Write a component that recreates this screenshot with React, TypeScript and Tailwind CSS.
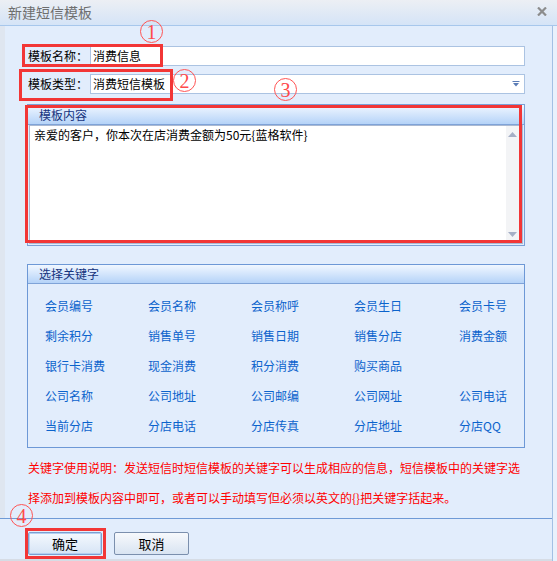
import React from "react";

const FONT = { fontFamily: '"Noto Sans CJK SC", "Noto Sans", sans-serif' };

const KEYWORDS = [
  ["会员编号", "会员名称", "会员称呼", "会员生日", "会员卡号"],
  ["剩余积分", "销售单号", "销售日期", "销售分店", "消费金额"],
  ["银行卡消费", "现金消费", "积分消费", "购买商品", ""],
  ["公司名称", "公司地址", "公司邮编", "公司网址", "公司电话"],
  ["当前分店", "分店电话", "分店传真", "分店地址", "分店QQ"],
];

const Circled = ({ n, className }: { n: string; className: string }) => (
  <span
    className={`absolute flex h-[23px] w-[23px] items-center justify-center rounded-full border border-[#ff5454] text-[20px] leading-none text-[#ff4a4a] ${className}`}
    style={{ fontFamily: '"Liberation Serif", serif' }}
  >
    {n}
  </span>
);

const RedBox = ({ className }: { className: string }) => (
  <div className={`pointer-events-none absolute border-[3px] border-[#f23636] ${className}`} />
);

const GroupHeader = ({ title, h }: { title: string; h: string }) => (
  <div className={`flex items-center border-b border-[#7fa3d8] bg-linear-to-b from-[#f1f7ff] to-[#b5d3f8] pl-[11px] text-[12px] text-[#15337d] ${h}`}>
    {title}
  </div>
);

export default function App() {
  return (
    <div className="relative flex h-[561px] w-[557px] flex-col overflow-hidden bg-[#e2edfc] text-black" style={FONT}>
      {/* Title bar */}
      <div className="flex h-[26px] shrink-0 items-center justify-between border-b border-[#a7c7ec] bg-linear-to-b from-[#eceff4] to-[#d5e4f7] pl-[8px] pr-[10px]">
        <span className="text-[14px] text-[#6e6e6e]">新建短信模板</span>
        <svg width="10" height="9" viewBox="0 0 10 9" className="mb-[2px]">
          <path d="M1 0.5 L9 8.5 M9 0.5 L1 8.5" stroke="#8c8c8c" strokeWidth="2.2" />
        </svg>
      </div>

      <div className="flex flex-1">
        <div className="flex flex-1 flex-col border-r border-[#a3c0e4]">
          {/* Body */}
          <div className="border-l-[5px] border-[#dfe6f0] pt-[20px] pl-[23px] pr-[27px] pb-[5px]">
            <div className="flex h-[20px] items-center">
              <span className="w-[62px] text-[12px]">模板名称：</span>
              <div className="flex h-full flex-1 items-center border border-[#abc3e2] bg-white pl-[2px] text-[12px]">
                消费信息
              </div>
            </div>
            <div className="mt-[8px] flex h-[20px] items-center">
              <span className="w-[62px] text-[12px]">模板类型：</span>
              <div className="flex h-full flex-1 items-center justify-between border border-[#abc3e2] bg-white pl-[2px] pr-[4px] text-[12px]">
                <span>消费短信模板</span>
                <svg width="8" height="6" viewBox="0 0 8 6">
                  <path d="M0.5 0.5 H7.5" stroke="#5a7cb6" strokeWidth="1" />
                  <path d="M1 2 H7 L4 5.5 Z" fill="#5a7cb6" />
                </svg>
              </div>
            </div>

            {/* 模板内容 */}
            <div className="ml-[-1px] mt-[10px] flex h-[142px] flex-col border border-[#7ba0d6]">
              <GroupHeader title="模板内容" h="h-[20px]" />
              <div className="mx-[1px] mb-[1px] flex flex-1 border border-[#aab9d2] bg-white">
                <div className="flex-1 pl-[4px] pt-[1px] text-[12px] leading-[16px]">
                  亲爱的客户，你本次在店消费金额为50元{"{"}蓝格软件{"}"}
                </div>
                <div className="mr-[3px] flex w-[13px] flex-col items-center justify-between bg-[#f3f4f6] py-[6px]">
                  <svg width="9" height="5" viewBox="0 0 9 5">
                    <path d="M0 5 L4.5 0 L9 5 Z" fill="#a5afc6" />
                  </svg>
                  <svg width="9" height="5" viewBox="0 0 9 5">
                    <path d="M0 0 L9 0 L4.5 5 Z" fill="#a5afc6" />
                  </svg>
                </div>
              </div>
            </div>

            {/* 选择关键字 */}
            <div className="ml-[-1px] mt-[18px] flex h-[184px] flex-col border border-[#6d98d6]">
              <GroupHeader title="选择关键字" h="h-[19px]" />
              <div className="grid grid-cols-[103px_103px_103px_105px_1fr] auto-rows-[30px] pl-[17px] pt-[7px]">
                {KEYWORDS.flat().map((k, i) => (
                  <span key={i} className="text-[12px] leading-[30px] text-[#0b63cc]">
                    {k}
                  </span>
                ))}
              </div>
            </div>

            <div className="mt-[5px] text-[12px] leading-[30px] whitespace-nowrap text-[#ff0000]">
              <div>关键字使用说明：发送短信时短信模板的关键字可以生成相应的信息，短信模板中的关键字选</div>
              <div>择添加到模板内容中即可，或者可以手动填写但必须以英文的{"{}"}把关键字括起来。</div>
            </div>
          </div>

          {/* Bottom button panel */}
          <div className="flex flex-1 items-start gap-[12px] border-t border-b-2 border-t-[#6f9ad6] border-b-[#d6dce5] pl-[28px] pt-[13px]">
            <button className="h-[23px] w-[74px] rounded-[2px] border border-[#7d9fcf] bg-linear-to-b from-[#f5f9fe] to-[#d6e4f5] text-[13px] shadow-[inset_0_0_0_1px_#b3d0f2]">
              确定
            </button>
            <button className="h-[23px] w-[75px] rounded-[2px] border border-[#7b8fad] bg-linear-to-b from-[#f7f9fc] to-[#d9e4f2] text-[13px]">
              取消
            </button>
          </div>
        </div>
        <div className="w-[4px] bg-[#e9f1fc]" />
      </div>

      {/* Annotations */}
      <RedBox className="left-[22px] top-[44px] h-[23px] w-[141px]" />
      <RedBox className="left-[19px] top-[69px] h-[32px] w-[154px]" />
      <RedBox className="left-[25px] top-[105px] h-[138px] w-[497px]" />
      <RedBox className="left-[25px] top-[528px] h-[31px] w-[81px]" />
      <Circled n="1" className="left-[140px] top-[20px]" />
      <Circled n="2" className="left-[173px] top-[69px]" />
      <Circled n="3" className="left-[274px] top-[78px]" />
      <Circled n="4" className="left-[10px] top-[504px]" />
    </div>
  );
}
